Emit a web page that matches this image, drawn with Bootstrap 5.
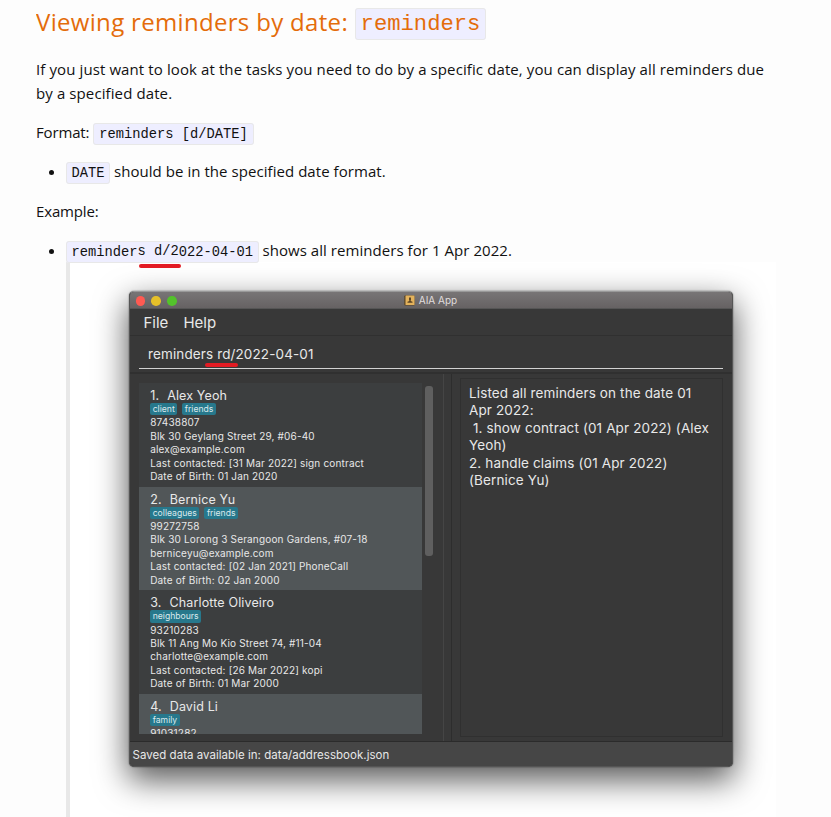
<!DOCTYPE html>
<html lang="en">
<head>
<meta charset="utf-8">
<title>Viewing reminders by date</title>
<link href="https://cdn.jsdelivr.net/npm/bootstrap@5.3.0/dist/css/bootstrap.min.css" rel="stylesheet">
<style>
body{background:#fdfdfd;color:#111;font-family:"Open Sans","Noto Sans",sans-serif;font-size:15px;line-height:24px;height:817px;overflow:hidden}
.guide{width:740px;height:817px;overflow:hidden;margin-left:36px;padding-top:4px}
.guide h2{font-size:24px;font-weight:400;line-height:36px;height:36px;color:#e46c0a;margin:0 0 17px;letter-spacing:.32px}
.guide p{margin:0 0 15px}
.guide code{font-family:"Liberation Mono",monospace;font-size:13.75px;line-height:1;letter-spacing:0;color:#111;background:#eef;border:1px solid #e8e8e8;border-radius:3px;padding:2.5px 5px;vertical-align:1px}
.guide h2 code{font-size:22.2px;color:inherit;vertical-align:2px}
.guide ul{margin:0 0 16px;padding-left:30px}
.guide ul code{padding:2.5px 4.5px}
.intro{letter-spacing:.104px}
.tight{letter-spacing:-.15px}
.loose{letter-spacing:.055px}
.red-line{position:absolute;height:4px;border-radius:2px;background:#e31b23;z-index:2}
.red-a{left:1px;width:42px;top:20px}
.red-b{left:-12px;width:33px;top:17px}
.shot{border-left:4px solid #e8e8e8;height:555px;padding:29px 43.5px 0 58.5px;background:#fff}
.app-win{font-family:Inter,"Liberation Sans",sans-serif;color:#e8e8e8;background:#383838;height:476px;border-radius:5px;overflow:hidden;box-shadow:0 0 1.5px rgba(0,0,0,.7),0 12px 32px 1px rgba(0,0,0,.66);border:1px solid #555;border-top-color:#999}
.title-bar{position:relative;height:17px;background:linear-gradient(#787576,#666263);border-bottom:1px solid #555;font-size:10px;line-height:16px;color:#e0dede}
.lights{position:absolute;left:6px;top:4px;gap:6.2px}
.lights span{width:9.6px;height:9.6px;border-radius:50%}
.l-red{background:#ff5a52}.l-yel{background:#e6c029}.l-grn{background:#53c22b}
.menu-row{height:27px;border-bottom:1px solid #303030;font-size:15px;line-height:27px;padding-left:14px;gap:15px}
.cmd-row{height:38px;padding:0 9px;border-bottom:2px solid #303030}
.cmd-text{height:33px;border-bottom:1.5px solid #d2d2d2;padding:8px 9px 0 9.5px;font-size:13.5px;letter-spacing:.12px;line-height:20px}
.panes{height:368px;border-bottom:1px solid #2b2b2b}
.left-pane{width:313px;padding:9px 0 0 9px;gap:2.500px}
.people{width:283.5px;height:350.5px;overflow:hidden;background:#3c3e3f}
.person{height:103.65px;padding:5px 11.5px 0 11.700px;font-size:10px;letter-spacing:.17px;line-height:13.45px;background:#3c3e3f;white-space:nowrap}
.person:nth-child(even){background:#515658}
.pname{font-size:12.5px;letter-spacing:.14px;line-height:15px;gap:8px;height:15px}
.tags{gap:5px;height:13.3px}
.tags span{font-size:8.65px;letter-spacing:0;line-height:12px;height:12.4px;padding:0 2.5px;background:#27788c;border-radius:2px;color:#dbe9ec}
.thumb{width:8px;height:170px;margin-top:3px;border-radius:3px;background:#5f5f5f}
.splitter{width:9px;border-left:1px solid #454545;border-right:1px solid #2d2d2d}
.right-pane{padding:4px 9px 4px 8px}
.result{height:100%;border:1px solid #303030;padding:6px 0 0 8.500px;font-size:13.5px;letter-spacing:.13px;line-height:17.4px;white-space:pre}
.status{font-size:11.5px;letter-spacing:.03px;line-height:26px;height:30px;padding-left:3px;background:#464646}
</style>
</head>
<body>
<main class="guide">
<h2>Viewing reminders by date: <code>reminders</code></h2>
<p class="intro">If you just want to look at the tasks you need to do by a specific date, you can display all reminders due<br>by a specified date.</p>
<p><span class="tight">Format:</span> <code>reminders [d/DATE]</code></p>
<ul class="mb-3"><li><code>DATE</code> <span class="loose">should be in the specified date format.</span></li></ul>
<p><span class="tight">Example:</span></p>
<ul><li><code>reminder<span class="position-relative">s d/2<span class="red-line red-a"></span></span>022-04-01</code> <span class="loose">shows all reminders for 1 Apr 2022.</span>
<div class="shot">
<div class="app-win">
<div class="title-bar d-flex justify-content-center align-items-center">
<div class="lights d-flex"><span class="l-red"></span><span class="l-yel"></span><span class="l-grn"></span></div>
<svg width="11" height="11" viewBox="0 0 11 11" class="me-1"><rect x=".3" y=".5" width="10.2" height="10" rx=".8" fill="#594526"/><rect x="1.5" y=".5" width="9" height="9.6" rx=".6" fill="#e3b25c"/><path d="M5 2.5h2v2.2l-.4 1.2 1.9.9v1H3.5v-1l1.9-.9L5 4.7z" fill="#5b4526"/></svg>
<span>AIA App</span>
</div>
<div class="menu-row d-flex"><span>File</span><span>Help</span></div>
<div class="cmd-row"><div class="cmd-text">reminders <span class="position-relative">rd/<span class="red-line red-b"></span></span>2022-04-01</div></div>
<div class="panes d-flex">
<div class="left-pane d-flex flex-shrink-0">
<div class="people">
<div class="person"><div class="pname d-flex"><span>1.</span><span>Alex Yeoh</span></div><div class="tags d-flex"><span>client</span><span>friends</span></div>87438807<br>Blk 30 Geylang Street 29, #06-40<br>alex@example.com<br>Last contacted: [31 Mar 2022] sign contract<br>Date of Birth: 01 Jan 2020</div>
<div class="person"><div class="pname d-flex"><span>2.</span><span>Bernice Yu</span></div><div class="tags d-flex"><span>colleagues</span><span>friends</span></div>99272758<br>Blk 30 Lorong 3 Serangoon Gardens, #07-18<br>berniceyu@example.com<br>Last contacted: [02 Jan 2021] PhoneCall<br>Date of Birth: 02 Jan 2000</div>
<div class="person"><div class="pname d-flex"><span>3.</span><span>Charlotte Oliveiro</span></div><div class="tags d-flex"><span>neighbours</span></div>93210283<br>Blk 11 Ang Mo Kio Street 74, #11-04<br>charlotte@example.com<br>Last contacted: [26 Mar 2022] kopi<br>Date of Birth: 01 Mar 2000</div>
<div class="person"><div class="pname d-flex"><span>4.</span><span>David Li</span></div><div class="tags d-flex"><span>family</span></div>91031282</div>
</div>
<div class="thumb"></div>
</div>
<div class="splitter"></div>
<div class="right-pane flex-grow-1"><div class="result">Listed all reminders on the date 01
Apr 2022:
 1. show contract (01 Apr 2022) (Alex
Yeoh)
2. handle claims (01 Apr 2022)
(Bernice Yu)</div></div>
</div>
<div class="status">Saved data available in: data/addressbook.json</div>
</div>
</div>
</li></ul>
</main>
<script src="https://cdn.jsdelivr.net/npm/bootstrap@5.3.0/dist/js/bootstrap.bundle.min.js"></script>
</body>
</html>
